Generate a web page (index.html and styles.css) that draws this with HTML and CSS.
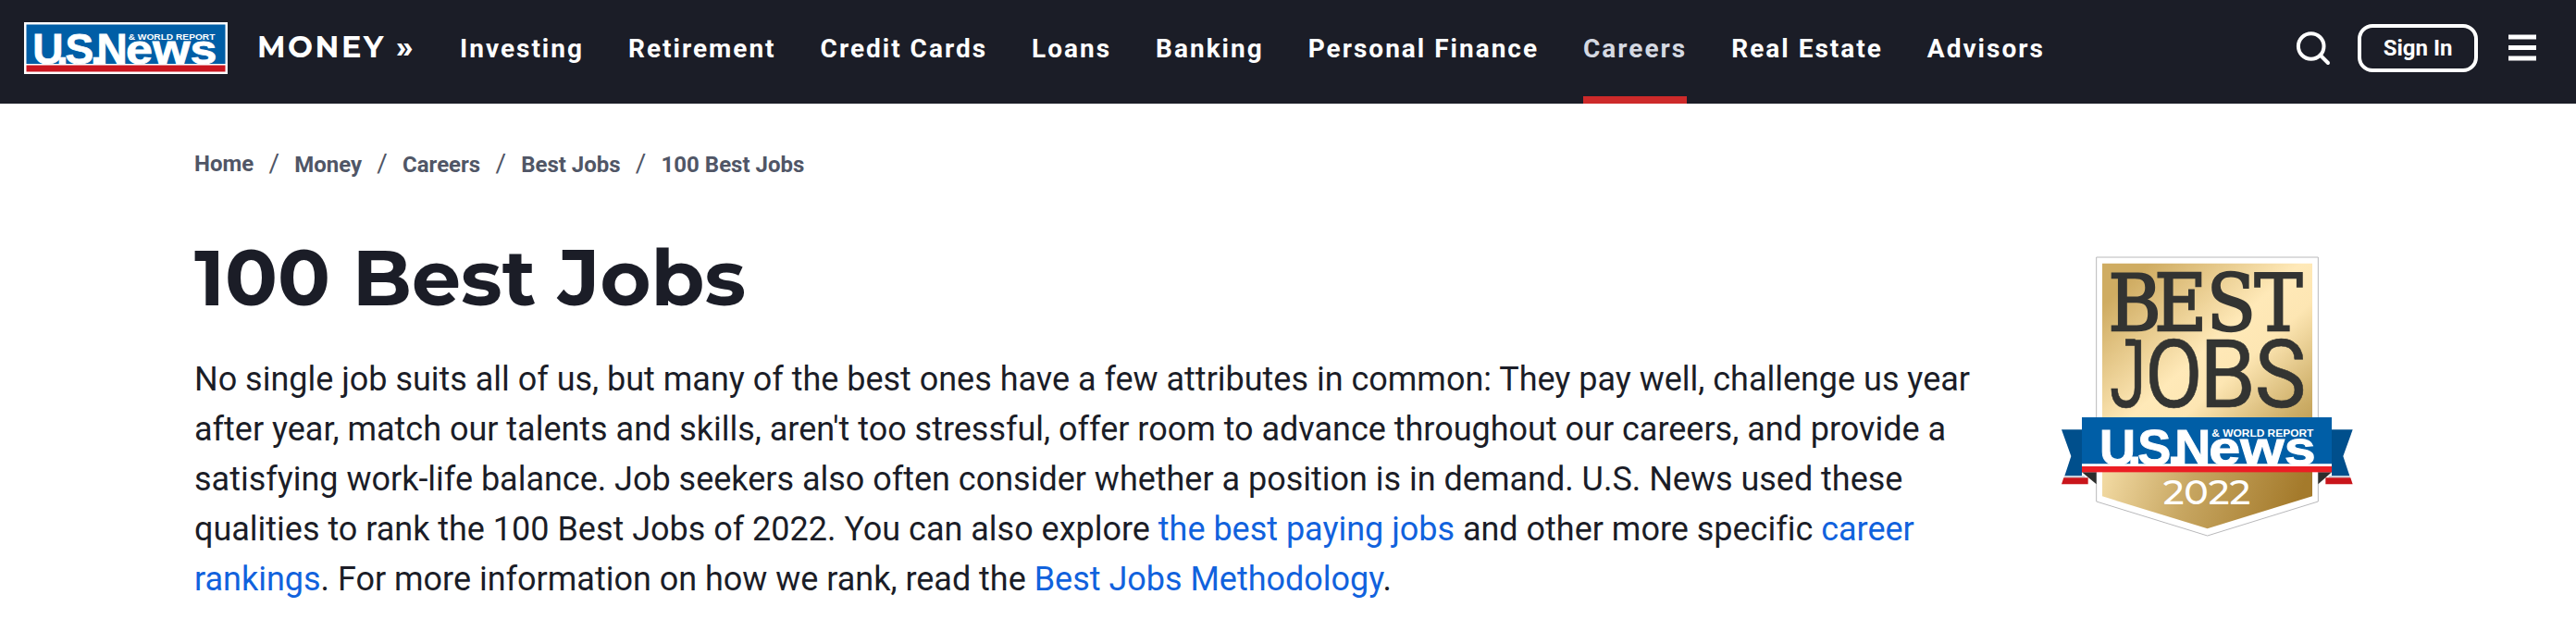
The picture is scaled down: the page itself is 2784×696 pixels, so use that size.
FILE: index.html
```html
<!DOCTYPE html>
<html lang="en">
<head>
  <meta charset="UTF-8">
  <meta name="viewport" content="width=device-width, initial-scale=1.0">
  <title>100 Best Jobs</title>
  <link rel="stylesheet" href="styles.css">
</head>
<body>
  <header class="header">
    <a class="logo" href="#">
      <svg width="220" height="56" viewBox="0 0 220 56">
        <rect width="220" height="56" fill="#fff"/>
        <rect x="2.5" y="2.5" width="215" height="42.5" fill="#005ea6"/>
        <rect x="2.5" y="46.5" width="215" height="7" fill="#c91620"/>
        <g fill="#fff" transform="translate(-41 -161.8) scale(0.284)">
          <g id="wordmark" class="wordmark">
            <text x="177 268 301 398 421" y="727" font-size="162">U.S.N</text>
            <text x="532" y="727" font-size="154" textLength="346" lengthAdjust="spacingAndGlyphs">ews</text>
            <text class="tagline" x="541" y="635" font-size="31" textLength="330" lengthAdjust="spacingAndGlyphs">&amp; WORLD REPORT</text>
          </g>
        </g>
      </svg>
    </a>
    <a class="section-name" href="#">MONEY »</a>
    <nav class="nav">
      <a href="#">Investing</a>
      <a href="#">Retirement</a>
      <a href="#">Credit Cards</a>
      <a href="#">Loans</a>
      <a href="#">Banking</a>
      <a href="#">Personal Finance</a>
      <a class="active" href="#">Careers</a>
      <a href="#">Real Estate</a>
      <a href="#">Advisors</a>
    </nav>
    <div class="tools">
      <svg class="search" width="40" height="40" viewBox="0 0 40 40" fill="none" stroke="#fff" stroke-width="4" stroke-linecap="round">
        <circle cx="17.7" cy="18" r="13.8"/>
        <path d="M27.5 27.5 36 36"/>
      </svg>
      <button type="button" class="sign-in">Sign In</button>
      <svg class="menu" width="30" height="30" viewBox="0 0 30 30" fill="#fff">
        <rect y="0.5" width="30" height="5"/>
        <rect y="12" width="30" height="5"/>
        <rect y="23.5" width="30" height="5"/>
      </svg>
    </div>
  </header>

  <main class="main">
    <section class="intro">
      <ol class="breadcrumbs">
        <li><a href="#">Home</a></li>
        <li><a href="#">Money</a></li>
        <li><a href="#">Careers</a></li>
        <li><a href="#">Best Jobs</a></li>
        <li><a href="#">100 Best Jobs</a></li>
      </ol>
      <h1>100 Best Jobs</h1>
      <p>No single job suits all of us, but many of the best ones have a few attributes in common: They pay well, challenge us year after year, match our talents and skills, aren't too stressful, offer room to advance throughout our careers, and provide a satisfying work-life balance. Job seekers also often consider whether a position is in demand. U.S. News used these qualities to rank the 100 Best Jobs of 2022. You can also explore <a href="#">the best paying jobs</a> and other more specific <a href="#">career rankings</a>. For more information on how we rank, read the <a href="#">Best Jobs Methodology</a>.</p>
    </section>

    <svg class="badge" width="350" height="330" viewBox="0 0 1050 990">
      <defs>
        <linearGradient id="gold" gradientUnits="userSpaceOnUse" x1="200" y1="120" x2="850" y2="840">
          <stop offset="0.06" stop-color="#cfac62"/>
          <stop offset="0.4" stop-color="#ffe9b8"/>
          <stop offset="0.52" stop-color="#fde6b3"/>
          <stop offset="0.75" stop-color="#cdae68"/>
          <stop offset="1" stop-color="#a67c2c"/>
        </linearGradient>
        <linearGradient id="goldTip" gradientUnits="userSpaceOnUse" x1="190" y1="740" x2="790" y2="940">
          <stop offset="0" stop-color="#f3dba4"/>
          <stop offset="0.45" stop-color="#c7a661"/>
          <stop offset="1" stop-color="#a47a2b"/>
        </linearGradient>
      </defs>

      <!-- shield -->
      <path d="M167 54H886V846L527 957 167 846Z" fill="#fff" stroke="#b9b9bb" stroke-width="3"/>
      <path d="M186 74H867V600H186Z" fill="url(#gold)"/>
      <path d="M186 740H867V829L527 934 186 829Z" fill="url(#goldTip)"/>

      <text class="slab" transform="scale(0.92 1)" x="223 386 569.5 739" y="290">BEST</text>
      <g class="sans">
        <rect x="262" y="320" width="30" height="20"/>
        <text x="210" y="539" textLength="118" lengthAdjust="spacingAndGlyphs">J</text>
        <text x="324" y="539" textLength="188" lengthAdjust="spacingAndGlyphs">O</text>
        <text x="501" y="539" textLength="183" lengthAdjust="spacingAndGlyphs">B</text>
        <text x="680" y="539" textLength="167" lengthAdjust="spacingAndGlyphs">S</text>
      </g>

      <!-- ribbon -->
      <path d="M54 613H120V763H64L85 699Z M998 613H930V763H988L967 699Z" fill="#004f8c"/>
      <path d="M64 763H130V769H62Z M988 763H920V769H990Z" fill="#c9cdd6"/>
      <path d="M61 769H140V790H54Z M991 769H910V790H998Z" fill="#c9151b"/>
      <path d="M120 751H167V790Z M930 751H886V790Z" fill="#2c2e2d"/>
      <rect x="120" y="573" width="810" height="152" fill="#005ea6"/>
      <rect x="120" y="724" width="810" height="8" fill="#fff"/>
      <rect x="120" y="732" width="810" height="19" fill="#ec1d24"/>
      <use href="#wordmark" fill="#fff"/>
      <text class="year" x="383" y="855" textLength="284" lengthAdjust="spacingAndGlyphs">2022</text>
    </svg>
  </main>
</body>
</html>
```

FILE: styles.css
```css
* {
  box-sizing: border-box;
}

body {
  margin: 0;
  font-family: Roboto, Arial, sans-serif;
  color: #1b1d27;
  background-color: #fff;
}

a {
  color: #1162dd;
  text-decoration: none;
}

.header {
  display: flex;
  height: 112px;
  padding: 0 43px 0 26px;
  background-color: #1b1d27;
}

.header a {
  color: #fff;
}

.logo {
  height: 56px;
  margin-top: 24px;
}

.logo svg {
  display: block;
}

.wordmark {
  font-family: "Liberation Sans", Arial, sans-serif;
  font-weight: bold;
  stroke: #fff;
  stroke-width: 3px;
}

.tagline {
  stroke: none;
}

.section-name {
  width: 217px;
  margin-left: 32px;
  font-family: Montserrat, Inter, sans-serif;
  font-size: 32px;
  font-weight: bold;
  letter-spacing: 2.5px;
  line-height: 102px;
  white-space: nowrap;
}

.nav {
  display: flex;
  gap: 48px;
  margin-left: 2px;
}

.nav a {
  height: 112px;
  padding-top: 1px;
  border-bottom: 8px solid transparent;
  font-size: 28px;
  font-weight: bold;
  letter-spacing: 2px;
  line-height: 104px;
  white-space: nowrap;
}

.nav .active {
  color: #d5d9e2;
  border-bottom-color: #cd2a2a;
}

.tools {
  display: flex;
  align-items: center;
  height: 104px;
  margin-left: auto;
}

.sign-in {
  width: 130px;
  height: 52px;
  margin: 0 33px 0 28px;
  padding: 0;
  border: 4px solid #fff;
  border-radius: 16px;
  background: none;
  color: #fff;
  font-family: inherit;
  font-size: 24px;
  font-weight: bold;
}

.main {
  display: flex;
  padding-left: 210px;
}

.intro {
  width: 1940px;
  padding-top: 47px;
}

.breadcrumbs {
  display: flex;
  margin: 0;
  padding: 0;
  list-style: none;
  font-size: 24px;
  font-weight: bold;
  line-height: 36px;
}

.breadcrumbs a {
  color: #505666;
}

.breadcrumbs li + li::before {
  content: "/";
  padding: 0 16.2px;
  color: #505666;
  font-size: 28px;
  font-weight: normal;
}

h1 {
  margin: 55px 0 34px;
  font-family: Montserrat, Inter, sans-serif;
  font-size: 84px;
  font-weight: bold;
  line-height: 98px;
}

.intro p {
  margin: 0;
  font-size: 36px;
  letter-spacing: -0.015px;
  line-height: 54px;
}

.badge {
  margin: 148px 0 0 60px;
}

.slab {
  fill: #333432;
  stroke: #333432;
  stroke-width: 7px;
  font-family: "DejaVu Serif", serif;
  font-size: 254px;
}

.sans {
  fill: #333432;
  stroke: #333432;
  stroke-width: 2px;
  font-size: 307px;
}

.year {
  fill: #fff;
  font-family: Montserrat, sans-serif;
  font-size: 114px;
  font-weight: 500;
}
```
